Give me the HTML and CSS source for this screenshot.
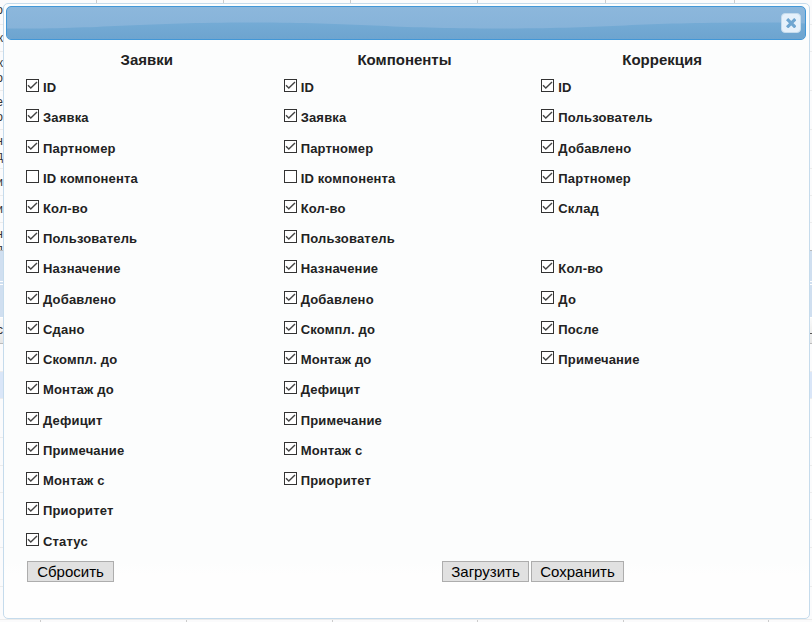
FILE: index.html
```
<!DOCTYPE html>
<html lang="ru">
<head>
<meta charset="utf-8">
<title>Столбцы</title>
<link rel="stylesheet" href="styles.css">
</head>
<body>
<div class="page" id="page"></div>
<div class="dialog">
  <div class="titlebar">
    <svg class="wave" viewBox="0 0 798 32" preserveAspectRatio="none"><defs><linearGradient id="w" x1="0" y1="0" x2="0" y2="1"><stop offset="0" stop-color="#74abd5"/><stop offset="1" stop-color="#6ea4cf"/></linearGradient></defs><path fill="url(#w)" d="M0 21.5C100 22 130 15.5 243 15.5C350 15.5 380 21.5 493 21.5C600 21.5 630 15.5 743 15.5C765 15.5 780 15.5 798 16.5V32H0Z"/></svg>
    <button class="close" aria-label="Закрыть"><svg width="10" height="10" viewBox="0 0 10 10"><path d="M2.2 2.2L8.2 8.2M8.2 2.2L2.2 8.2" stroke="#6fa6d1" stroke-width="3.2" stroke-linecap="square"/></svg></button>
  </div>
  <div class="columns" id="columns"></div>
  <div class="buttons"><button class="btn reset">Сбросить</button><button class="btn load">Загрузить</button><button class="btn save">Сохранить</button></div>
</div>
<script src="app.js"></script>
</body>
</html>
```
FILE: styles.css
```
* { box-sizing: border-box; }
body {
  margin: 0;
  width: 812px;
  height: 622px;
  overflow: hidden;
  position: relative;
  background: #fbfbfc;
  color: #222;
  font-family: "Liberation Sans", Arial, sans-serif;
}
.row { height: var(--h); border-bottom: 1px solid #ececec; overflow: hidden; display: flex; justify-content: space-between; align-items: center; }
.row.blue { background: #d0dff0; border-color: #fff; }
.row.pale { background: #dae6f8; }
.row.head { background: linear-gradient(#fafafa, #e6e6e6); border-color: #bbb; }
.row.last { border-color: #b9b9b9; }
.row.last .edge { padding-top: 10px; }
.row.first .edge { padding-bottom: 6px; }
.row.cols { justify-content: flex-start; align-items: stretch; border: 0; }
.col { border-right: 1px solid #ccc; width: var(--w); flex: none; }
.edge { width: 3px; overflow: hidden; display: flex; flex-direction: column; align-items: flex-end; justify-content: center; height: 100%; font-size: 12px; line-height: 15px; color: #333; }
.row.head::after { content: ""; width: 2px; height: 6px; border-left: 1px solid #6fa6d1; border-bottom: 1px solid #555; }
.dialog {
  position: absolute;
  left: 3px;
  top: 3px;
  width: 807px;
  height: 616px;
  padding: 2px 3px 2px 2px;
  border: 1px solid #c5dbec;
  border-radius: 5px;
  background: linear-gradient(#fcfdfd 0%, #fcfdfd 91%, #fefefe 93%);
}
.titlebar {
  position: relative;
  width: 800px;
  height: 34px;
  padding: 6px 4px;
  display: flex;
  justify-content: flex-end;
  border: 1px solid #4297d7;
  border-radius: 5px;
  background: linear-gradient(#8cb7dc, #84b1d7);
  overflow: hidden;
}
.wave { position: absolute; left: 0; top: 0; width: 100%; height: 100%; }
.close {
  position: relative;
  width: 20px;
  height: 20px;
  padding: 0;
  display: grid;
  place-items: center;
  border: 1px solid #c5dbec;
  border-radius: 4px;
  background: #e6f1fb;
}
.columns {
  display: grid;
  grid-template-columns: repeat(3, 257.67px);
  margin: 11px 0 0 12px;
  height: 510px;
}
.column h2 {
  margin: 0;
  height: 21px;
  line-height: 17px;
  text-align: center;
  font-size: 15px;
}
.item {
  height: 30.235px;
  padding: 7.08px 0 0 8px;
  display: flex;
  align-items: flex-start;
  font-size: 13px;
  font-weight: bold;
  line-height: 17px;
  letter-spacing: 0.17px;
}
.item svg { width: 13px; height: 13px; margin-right: 4px; flex: none; }
.buttons { display: flex; padding-left: 21px; }
.btn {
  height: 21px;
  padding: 0;
  border: 1px solid #adadad;
  background: #e1e1e1;
  color: #000;
  font: 15px/19px "Liberation Sans", Arial, sans-serif;
}
.reset, .load { width: 87px; }
.load { margin-left: 328px; }
.save { width: 93px; margin-left: 2px; }
```
FILE: app.js
```
const columns = [
  ["Заявки", ["ID", "Заявка", "Партномер", "ID компонента", "Кол-во", "Пользователь", "Назначение", "Добавлено", "Сдано", "Скомпл. до", "Монтаж до", "Дефицит", "Примечание", "Монтаж с", "Приоритет", "Статус"]],
  ["Компоненты", ["ID", "Заявка", "Партномер", "ID компонента", "Кол-во", "Пользователь", "Назначение", "Добавлено", "Скомпл. до", "Монтаж до", "Дефицит", "Примечание", "Монтаж с", "Приоритет"]],
  ["Коррекция", ["ID", "Пользователь", "Добавлено", "Партномер", "Склад", "", "Кол-во", "До", "После", "Примечание"]]
];
const tick = '<path d="M2 6.3L4.8 9.1L11 3" fill="none" stroke="#444" stroke-width="1.4"/>';
const box = on => `<svg viewBox="0 0 13 13"><rect x=".5" y=".5" width="12" height="12" fill="#fff" stroke="#333"/>${on ? tick : ""}</svg>`;
document.getElementById("columns").innerHTML = columns.map(([title, items]) =>
  `<div class="column"><h2>${title}</h2>${items.map(t => `<div class="item">${t ? box(t !== "ID компонента") + `<span>${t}</span>` : ""}</div>`).join("")}</div>`).join("");

const cols = ws => `<div class="row cols" style="--h:3px">${ws.map(w => `<div class="col" style="--w:${w}px"></div>`).join("")}</div>`;
const rows = [
  [22, "first", "о"], [27, "", "к"], [39, "", "ж", "о"], [39, "", "е", "о"], [39, "", "н", "д"],
  [27, "", "и"], [27, "", "и"], [28, "last", "н", "д"],
  [31, "blue"], [3, "blue"], [33, "blue"], [26, "head", "с"], [28, ""], [27, "pale"],
  [39, ""], [28, ""], [27, ""], [27, ""], [28, ""], [39, ""], [33, ""]
];
document.getElementById("page").innerHTML = cols([97, 127, 127, 127, 128, 129]) +
  rows.map(([h, c, ...t]) => `<div class="row ${c}" style="--h:${h}px"><div class="edge">${t.map(s => `<span>${s}</span>`).join("")}</div></div>`).join("") +
  cols([41, 146, 146, 145, 146, 145]);
```
